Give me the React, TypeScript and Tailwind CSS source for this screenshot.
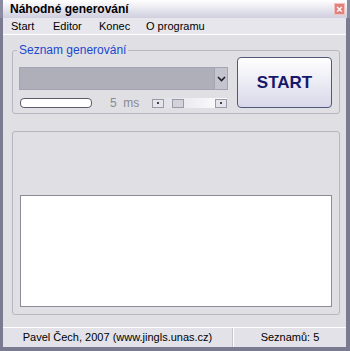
import React from "react";

const font = { fontFamily: '"Liberation Sans", Arial, sans-serif' };

const SmallBtn = () => (
  <div className="w-[12px] h-[9px] border border-[#9a9aa8] bg-[#e4e4ea] flex items-center justify-center">
    <div className="w-[2px] h-[2px] bg-[#404048]" />
  </div>
);

const App = () => {
  return (
    <div
      style={font}
      className="w-[350px] h-[351px] flex flex-col bg-[#7a7a90] overflow-hidden text-[11px] text-black"
    >
      {/* title bar */}
      <div className="h-[18px] shrink-0 flex items-center justify-between pl-[7px] pr-[2px] bg-gradient-to-b from-[#ffffff] to-[#cfcfdf] border-l-[3px] border-r-[3px] border-[#8a8aa0]">
        <span className="font-bold text-[12px] leading-none">Náhodné generování</span>
        <div className="w-[11px] h-[12px] bg-[#e2807c] border border-[#f4c0bc] flex items-center justify-center text-white text-[11px] leading-none font-bold">
          ×
        </div>
      </div>

      <div className="flex-1 flex flex-col ml-[3px] mr-[4px] mb-[4px] bg-[#dfdfe4]">
        {/* menu */}
        <div className="h-[17px] shrink-0 flex items-center bg-[#e6e6ec] border-b border-white pl-[8px]">
          <span className="w-[42px]">Start</span>
          <span className="w-[46px]">Editor</span>
          <span className="w-[47px]">Konec</span>
          <span>O programu</span>
        </div>

        <div className="flex flex-col pl-[9px] pr-[6px] pt-[15px]">
          {/* group 1 */}
          <div className="h-[64px] border border-[#b6b6c0] rounded-[3px] relative flex items-start pl-[6px]">
            <span className="absolute left-[4px] top-[-7px] px-[2px] bg-[#dfdfe4] text-[#1c48d0] text-[12px] leading-[12px]">
              Seznam generování
            </span>
            <div className="flex flex-col w-[209px] mt-[16px]">
              <div className="h-[23px] flex border border-[#a4a4b4] bg-[#afafb9]">
                <div className="flex-1" />
                <div className="w-[13px] bg-[#c4c4ce] border-l border-[#a4a4b4] flex items-center justify-center">
                  <svg width="9" height="6" viewBox="0 0 9 6">
                    <path d="M1 1 L4.5 4.5 L8 1" stroke="#202028" strokeWidth="1.6" fill="none" />
                  </svg>
                </div>
              </div>
              <div className="flex items-center mt-[8px] h-[10px] pl-[1px]">
                <div className="w-[72px] h-[10px] rounded-[4px] border border-[#5c5c6a] bg-white shrink-0" />
                <span className="ml-[18px] w-[27px] whitespace-nowrap text-[#8a8a94] text-[12px] leading-none">5&nbsp; ms</span>
                <div className="ml-[15px] w-[75px] h-[10px] shrink-0 flex items-center justify-between bg-gradient-to-r from-[#dcdce4] to-white">
                  <div className="flex items-center gap-[8px]">
                    <SmallBtn />
                    <div className="w-[12px] h-[9px] border border-[#9a9aa8] bg-[#d2d2da]" />
                  </div>
                  <SmallBtn />
                </div>
              </div>
            </div>
            <button className="ml-[9px] mt-[6px] w-[95px] h-[51px] rounded-[4px] border border-[#505a78] bg-gradient-to-b from-white to-[#d8d8ea] text-[#18186a] font-bold text-[17px] flex items-center justify-center">
              START
            </button>
          </div>

          {/* group 2 */}
          <div className="mt-[17px] h-[184px] border border-[#b6b6c0] rounded-[3px] px-[7px] pt-[63px] pb-[7px] flex flex-col">
            <div className="flex-1 bg-white border border-[#8c8c98]" />
          </div>
        </div>

        <div className="flex-1" />

        {/* status bar */}
        <div className="h-[20px] shrink-0 flex border-t border-white bg-[#e2e2e8]">
          <div className="w-[230px] flex items-center justify-center border-r border-[#c4c4cc]">
            Pavel Čech, 2007 (www.jingls.unas.cz)
          </div>
          <div className="flex-1 flex items-center justify-center border-l border-white">Seznamů: 5</div>
        </div>
      </div>
    </div>
  );
};

export default App;
